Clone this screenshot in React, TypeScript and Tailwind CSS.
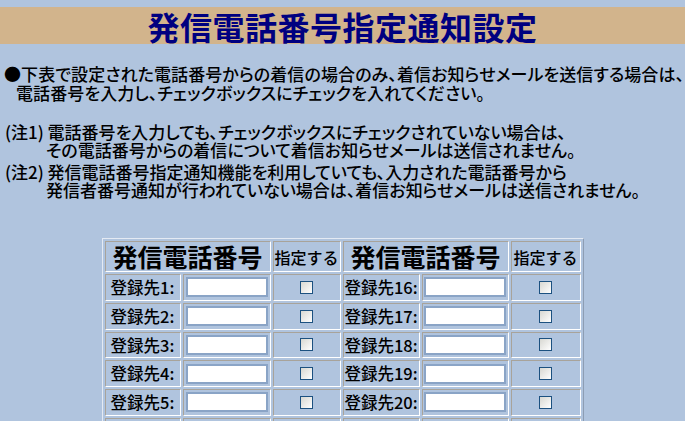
import React from "react";

const leftRows = [1, 2, 3, 4, 5, 6, 7, 8, 9, 10, 11, 12, 13, 14, 15];

const cell =
  "border border-t-[#a8a39a] border-l-[#a8a39a] border-b-white border-r-white p-0";

function PhoneInput() {
  return (
    <input
      type="text"
      className="block mx-auto w-[82px] h-[20px] bg-white border-2 border-[#8aa4c6] outline-none"
    />
  );
}

function Check() {
  return (
    <input
      type="checkbox"
      className="block mx-auto appearance-none w-[13px] h-[13px] border border-[#1c5180] bg-linear-to-br from-[#d8d8d2] to-white"
    />
  );
}

export default function App() {
  return (
    <div className="min-h-screen bg-[#b0c4de] text-black font-['Noto_Sans_CJK_JP',sans-serif] overflow-hidden">
      <div className="pt-[7px]">
        <div className="h-[37px] bg-[#d2b48c] flex items-center justify-center">
          <h1 className="text-[32px] leading-none font-bold text-[#000080] tracking-[0.5px]">
            発信電話番号指定通知設定
          </h1>
        </div>
      </div>

      <div className="mt-[20px] pl-[16px] -indent-[12px] text-[17px] leading-[19px] font-medium tracking-[0.1px] [font-feature-settings:'palt'] whitespace-nowrap">
        ●下表で設定された電話番号からの着信の場合のみ、着信お知らせメールを送信する場合は、
        <br />
        電話番号を入力し、チェックボックスにチェックを入れてください。
      </div>

      <div className="mt-[21px] text-[17px] leading-[18px] pl-[5px] space-y-[4px] font-medium [font-feature-settings:'palt'] whitespace-nowrap">
        <div>
          (注1) 電話番号を入力しても、チェックボックスにチェックされていない場合は、
          <div className="pl-[41px]">その電話番号からの着信について着信お知らせメールは送信されません。</div>
        </div>
        <div>
          (注2) 発信電話番号指定通知機能を利用していても、入力された電話番号から
          <div className="pl-[41px]">発信者番号通知が行われていない場合は、着信お知らせメールは送信されません。</div>
        </div>
      </div>

      <table className="mx-auto mt-[39px] border-separate border-spacing-[2px] border border-t-[#e4eaf3] border-l-[#e4eaf3] border-r-[#8d9db3] border-b-[#8d9db3]">
        <thead>
          <tr className="h-[31px]">
            <th colSpan={2} className={`${cell} text-[25px] leading-none font-bold text-center`}>
              発信電話番号
            </th>
            <th className={`${cell} w-[68px] text-[16px] font-medium text-center`}>指定する</th>
            <th colSpan={2} className={`${cell} text-[25px] leading-none font-bold text-center`}>
              発信電話番号
            </th>
            <th className={`${cell} w-[70px] text-[16px] font-medium text-center`}>指定する</th>
          </tr>
        </thead>
        <tbody>
          {leftRows.map((n) => (
            <tr key={n} className="h-[26px]">
              <td className={`${cell} w-[76px] text-[16.5px] font-medium text-center whitespace-nowrap`}>登録先{n}:</td>
              <td className={`${cell} w-[88px]`}>
                <PhoneInput />
              </td>
              <td className={`${cell} w-[68px]`}>
                <Check />
              </td>
              <td className={`${cell} w-[77px] text-[16.5px] font-medium text-center whitespace-nowrap`}>登録先{n + 15}:</td>
              <td className={`${cell} w-[87px]`}>
                <PhoneInput />
              </td>
              <td className={`${cell} w-[70px]`}>
                <Check />
              </td>
            </tr>
          ))}
        </tbody>
      </table>
    </div>
  );
}
